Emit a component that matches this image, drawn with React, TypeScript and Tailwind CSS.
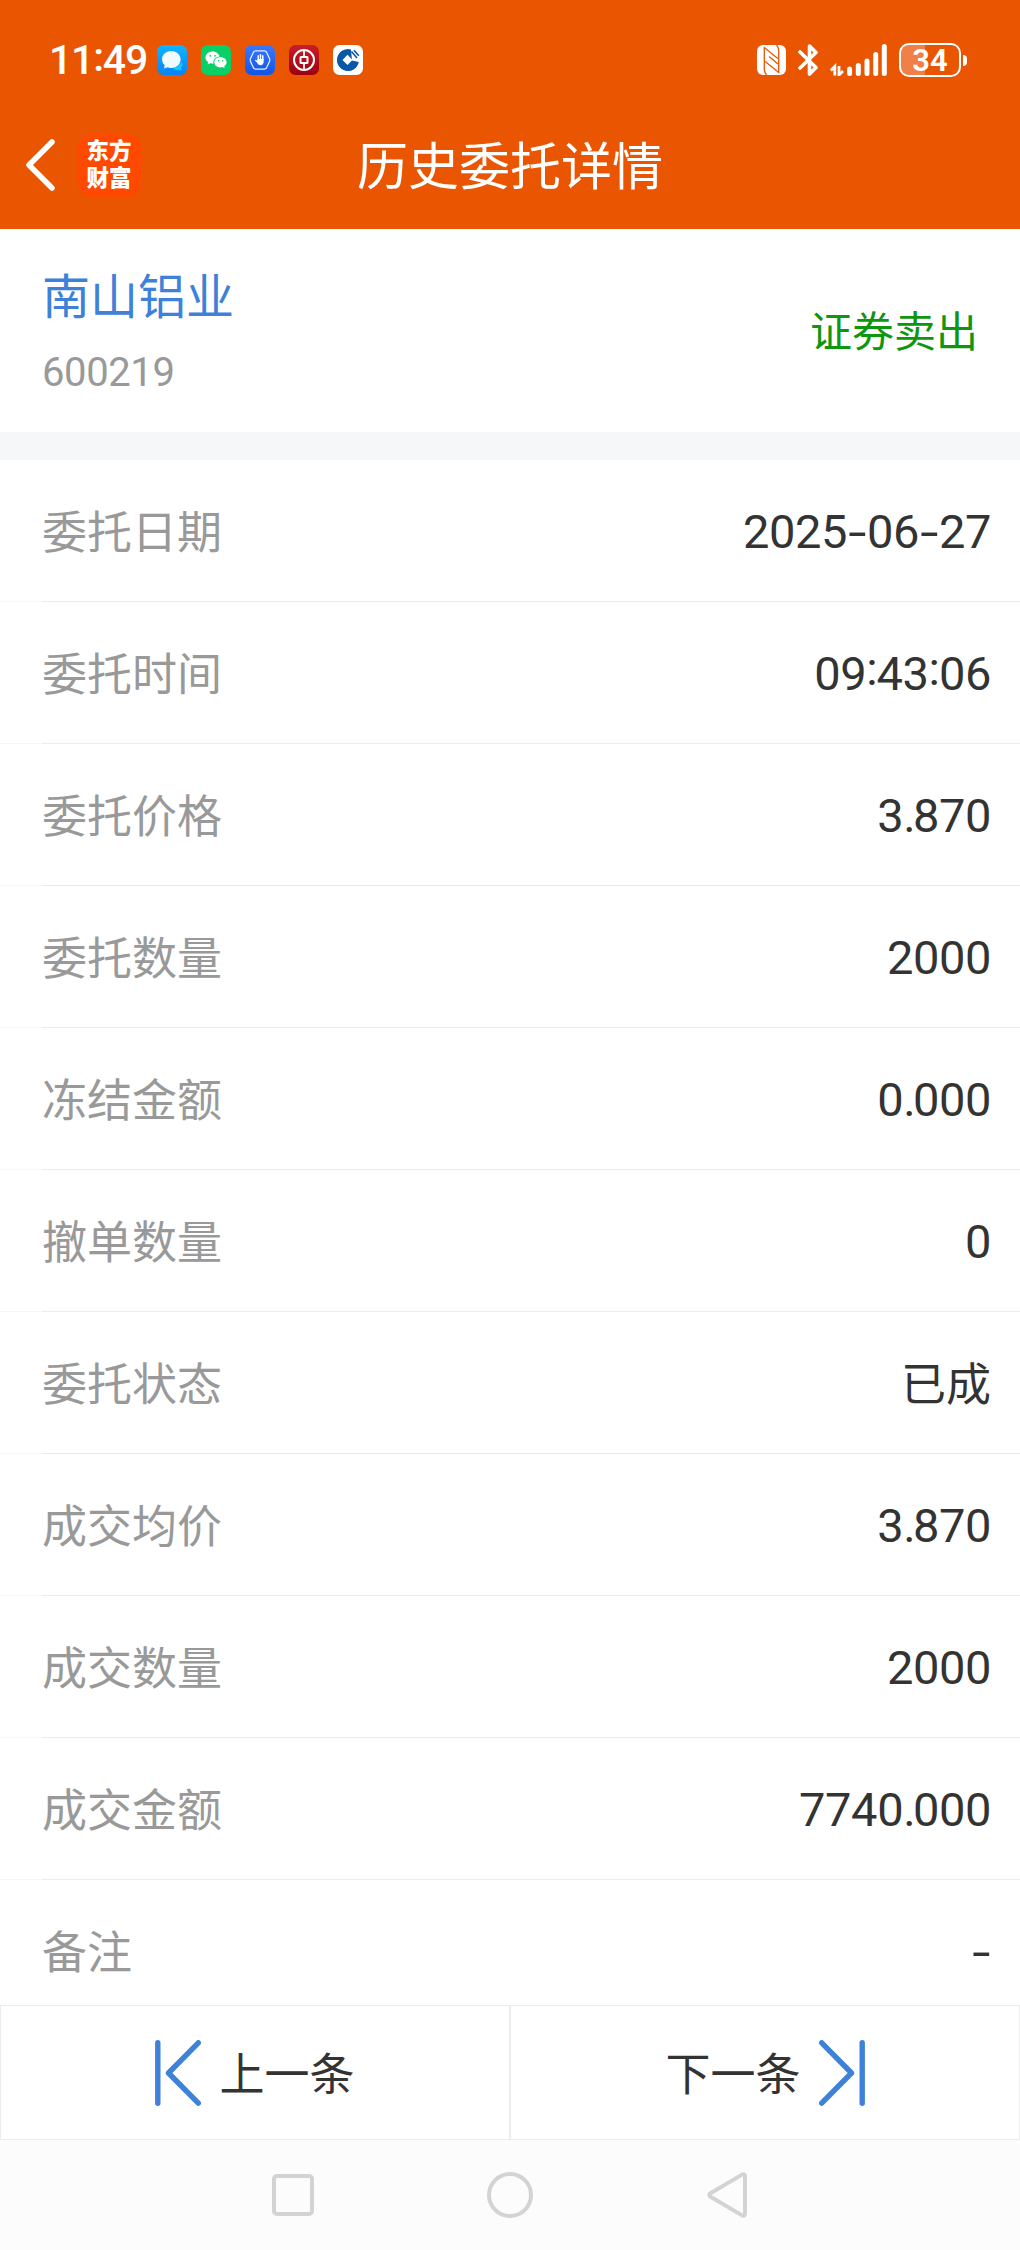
import type { ReactNode } from "react";

const rows: { label: string; value: string }[] = [
  { label: "委托日期", value: "2025-06-27" },
  { label: "委托时间", value: "09:43:06" },
  { label: "委托价格", value: "3.870" },
  { label: "委托数量", value: "2000" },
  { label: "冻结金额", value: "0.000" },
  { label: "撤单数量", value: "0" },
  { label: "委托状态", value: "已成" },
  { label: "成交均价", value: "3.870" },
  { label: "成交数量", value: "2000" },
  { label: "成交金额", value: "7740.000" },
  { label: "备注", value: "-" },
];

function AppIcons() {
  return (
    <div className="flex gap-[14px]">
      {/* messages */}
      <svg width="30" height="30" viewBox="0 0 30 30">
        <defs>
          <linearGradient id="msg" x1="0" y1="0" x2="0" y2="1">
            <stop offset="0" stopColor="#10b4ff" />
            <stop offset="1" stopColor="#0684f8" />
          </linearGradient>
        </defs>
        <rect width="30" height="30" rx="6.5" fill="url(#msg)" />
        <path d="M16 22c4 1 6-1 8.5-5 1.5 2 .8 4.500-.5 6l1 2.500-3.500-.7c-2.500.6-4.500-.5-5.500-2.800z" fill="#12ccff" />
        <path d="M14.3 6c5.300 0 9.300 3.700 9.300 8.500S19.600 23 14.300 23c-1.500 0-2.500-.2-3.600-.7L7 23.500l.7-3.200A8.300 8.300 0 0 1 5 14.500C5 9.700 9 6 14.300 6z" fill="#f0faff" />
      </svg>
      {/* wechat */}
      <svg width="30" height="30" viewBox="0 0 30 30">
        <rect width="30" height="30" rx="6.5" fill="#08cf66" />
        <path d="M11.500 6.500c-4 0-7 2.700-7 6 0 2 1 3.600 2.700 4.700l-.7 2.300 2.700-1.300c.7.200 1.500.3 2.300.3h1c-.8-4 2.500-7 6-7-.5-2.900-3.500-5-7-5z" fill="#fff" />
        <path d="M19.500 12c-3.500 0-6.200 2.300-6.200 5.200s2.700 5.200 6.200 5.200c.7 0 1.400-.1 2-.3l2.300 1.200-.6-2c1.500-1 2.400-2.400 2.400-4.100 0-2.900-2.800-5.200-6.100-5.200z" fill="#fff" />
        <g fill="#08cf66">
          <circle cx="9.3" cy="10.800" r=".9" />
          <circle cx="14" cy="10.800" r=".9" />
          <circle cx="17.500" cy="15.800" r=".8" />
          <circle cx="21.600" cy="15.800" r=".8" />
        </g>
      </svg>
      {/* hand in hexagon */}
      <svg width="30" height="30" viewBox="0 0 30 30">
        <defs>
          <linearGradient id="hand" x1="0" y1="0" x2="0" y2="1">
            <stop offset="0" stopColor="#3b78ff" />
            <stop offset="1" stopColor="#1055e8" />
          </linearGradient>
        </defs>
        <rect width="30" height="30" rx="6.5" fill="url(#hand)" />
        <path d="M10.500 5.800h9l1.800 1 3.400 7.200v2l-3.400 7.200-1.800 1h-9l-1.800-1L5.300 16v-2l3.400-7.200z" fill="none" stroke="#e6efff" strokeWidth="1.200" />
        <path d="M13.200 15v-4.200M15.500 15V9.800M17.800 15v-4.200M13 17.500l-2.200-2" stroke="#fff" strokeWidth="1.500" strokeLinecap="round" />
        <path d="M12.400 14h6.200v3.200q-.5 3-3.200 3-2 0-3-2z" fill="#fff" />
      </svg>
      {/* bank of china */}
      <svg width="30" height="30" viewBox="0 0 30 30">
        <defs>
          <linearGradient id="boc" x1="0" y1="0" x2="0" y2="1">
            <stop offset="0" stopColor="#cb1d2c" />
            <stop offset="1" stopColor="#9c0010" />
          </linearGradient>
        </defs>
        <rect width="30" height="30" rx="6.5" fill="url(#boc)" />
        <g fill="none" stroke="#fff">
          <circle cx="15" cy="15" r="10" strokeWidth="2" />
          <rect x="11.500" y="12" width="7" height="6" rx=".5" strokeWidth="2" />
          <path d="M15 5v6.500M15 18.500V25" strokeWidth="1.800" />
        </g>
      </svg>
      {/* construction bank */}
      <svg width="30" height="30" viewBox="0 0 30 30">
        <rect width="30" height="30" rx="6.5" fill="#fff" />
        <path d="M18 4.400A11 11 0 1 0 25.800 17L19 15.500z" fill="#0a58a5" />
        <path d="M14.500 9.800l5 5.200-5 5-5-5z" fill="#fff" />
        <path d="M18.500 6.500l5.500 6.500M21 5.300l4.800 5.500" stroke="#0a58a5" strokeWidth="1.600" />
      </svg>
    </div>
  );
}

function SystemIcons() {
  return (
    <div className="flex items-center">
      {/* nfc */}
      <svg className="mr-3" width="29" height="30" viewBox="0 0 29 30">
        <rect width="29" height="30" rx="6" fill="#fff" />
        <path d="M9.500 30Q7.300 28 7.300 24V2.500l13.500 11M19.500 0q2.200 2 2.200 6v21.500L8.200 16.500M12 11.500l9 7.500" fill="none" stroke="#ea5502" strokeWidth="1.300" />
      </svg>
      {/* bluetooth */}
      <svg className="mr-3" width="20" height="32" viewBox="0 0 20 32">
        <path d="M2 8l16 15.500-6.500 6.500V2L18 8.500 2 24" fill="none" stroke="#fff" strokeWidth="3.600" strokeLinejoin="round" strokeLinecap="round" />
      </svg>
      {/* mobile signal */}
      <svg className="mr-3" width="57" height="32" viewBox="0 0 57 32">
        <path d="M19.600 25v4.400M28.300 21.400v8M37 17v12.400M45.700 10.500v18.900M54.300 2.500v26.900" stroke="#fff" strokeLinecap="round" strokeWidth="5" />
        <path d="M.8 26.500l4-4V31.500M9 22v9l4-4" fill="none" stroke="#fff" strokeWidth="2.800" />
      </svg>
      <div className="flex items-center gap-[2px]">
        <div className="flex h-[34px] w-[62px] items-center justify-center overflow-hidden rounded-[10px] border-2 border-white bg-linear-to-r from-[#f07f48] from-[41%] to-transparent to-[41%] font-[Roboto] text-[31px] leading-none font-semibold">
          34
        </div>
        <div className="h-[11px] w-1 rounded-r-full bg-white" />
      </div>
    </div>
  );
}

function StepIcon({ flip }: { flip?: boolean }) {
  return (
    <svg className={flip ? "rotate-180" : ""} width="46" height="66" viewBox="0 0 46 66">
      <path d="M2.800 2.800v60.400M43.300 2.800L13.500 33l29.800 30.200" fill="none" stroke="#3d82d8" strokeWidth="5.400" strokeLinecap="round" strokeLinejoin="round" />
    </svg>
  );
}

// separators get their own width and height, apart from the digits
function Value({ children }: { children: string }) {
  return (
    <span>
      {children.split(/([-:.])/).map((part, i) => {
        if (part === ":")
          return (
            <span key={i} className="relative -top-[5px] tracking-[-1px]">
              :
            </span>
          );
        if (part === "-")
          return (
            <span key={i} className="inline-block w-5 scale-x-140 text-center">
              -
            </span>
          );
        if (part === ".")
          return (
            <span key={i} className="tracking-[-2.600px]">
              .
            </span>
          );
        return part;
      })}
    </span>
  );
}

function FooterButton({ children }: { children: ReactNode }) {
  return (
    <button className="flex h-[135px] w-[510px] items-center justify-center border border-[#ececec] bg-white text-[45px] leading-none text-[#333]">
      {children}
    </button>
  );
}

export default function App() {
  return (
    <div className="flex h-[2250px] w-[1020px] flex-col overflow-hidden bg-white font-['Noto_Sans_CJK_SC',sans-serif]">
      <header className="h-[229px] bg-[#ea5502] text-white">
        <div className="flex h-[101px] items-center justify-between pt-[19px] pr-[53px] pl-[49px]">
          <div className="flex items-center">
            <span className="w-[108px] font-[Roboto] text-[41px] leading-none font-medium tracking-[-1.200px]">
              11<span className="relative -top-[3px]">:</span>49
            </span>
            <AppIcons />
          </div>
          <SystemIcons />
        </div>
        <div className="grid h-32 grid-cols-[1fr_auto_1fr] items-center px-[25px]">
          <div className="flex items-center gap-[23px]">
            <svg width="30" height="52" viewBox="0 0 30 52">
              <path d="M27 3L4 26l23 23" fill="none" stroke="#fff" strokeWidth="5.500" strokeLinecap="round" strokeLinejoin="round" />
            </svg>
            <div className="flex size-[63px] items-center justify-center rounded-[14px] bg-[#ff4800] pr-px pb-1 text-[22.500px] leading-[27px] font-black">
              <span>
                东方
                <br />
                财富
              </span>
            </div>
          </div>
          <h1 className="pb-[3px] text-[51px] leading-none">历史委托详情</h1>
        </div>
      </header>

      <section className="flex h-[203px] items-center justify-between px-[42px]">
        <div className="flex flex-col gap-9 pt-px">
          <span className="text-[48px] leading-[48px] text-[#3d82d8]">南山铝业</span>
          <span className="font-[Roboto] text-[40px] leading-[40px] tracking-[-0.400px] text-[#999]">600219</span>
        </div>
        <span className="pb-[3px] text-[42px] leading-none text-[#0f960f]">证券卖出</span>
      </section>
      <div className="h-7 bg-[#f6f7f9]" />

      <main className="h-[1545px] overflow-hidden">
        {rows.map((row) => (
          <div key={row.label} className="flex h-[142px]">
            <div className="w-[42px] border-b border-[#f7f7f7]" />
            <div className="flex flex-1 items-center justify-between border-b border-[#ebebeb] pr-[29px] text-[45px] leading-none">
              <span className="pb-[3px] text-[#999]">{row.label}</span>
              {row.value === "已成" ? (
                <span className="pb-[3px] text-[#333]">{row.value}</span>
              ) : (
                <span className="pt-0.5 font-[Roboto] text-[47px] tracking-[-0.400px] text-[#333]">
                  <Value>{row.value}</Value>
                </span>
              )}
            </div>
          </div>
        ))}
      </main>

      <footer className="flex">
        <FooterButton>
          <StepIcon />
          <span className="ml-[18px] pb-[3px]">上一条</span>
        </FooterButton>
        <FooterButton>
          <span className="mr-[18px] pb-[3px]">下一条</span>
          <StepIcon flip />
        </FooterButton>
      </footer>

      <nav className="flex h-[110px] items-center justify-center bg-[#fcfcfc]">
        <div className="flex w-[217px] justify-center">
          <div className="size-[42px] rounded-[5px] border-4 border-[#d3d3d3]" />
        </div>
        <div className="flex w-[217px] justify-center">
          <div className="size-[46px] rounded-full border-4 border-[#d3d3d3]" />
        </div>
        <div className="flex w-[217px] justify-center">
          <svg width="40" height="46" viewBox="0 0 40 46">
            <path d="M35.500 2.400L3.500 21.200q-2.500 1.800 0 3.600L35.500 43.600q2.200.8 2.500-2V4.400q-.3-2.800-2.500-2z" fill="none" stroke="#d3d3d3" strokeWidth="4" strokeLinejoin="round" />
          </svg>
        </div>
      </nav>
    </div>
  );
}
